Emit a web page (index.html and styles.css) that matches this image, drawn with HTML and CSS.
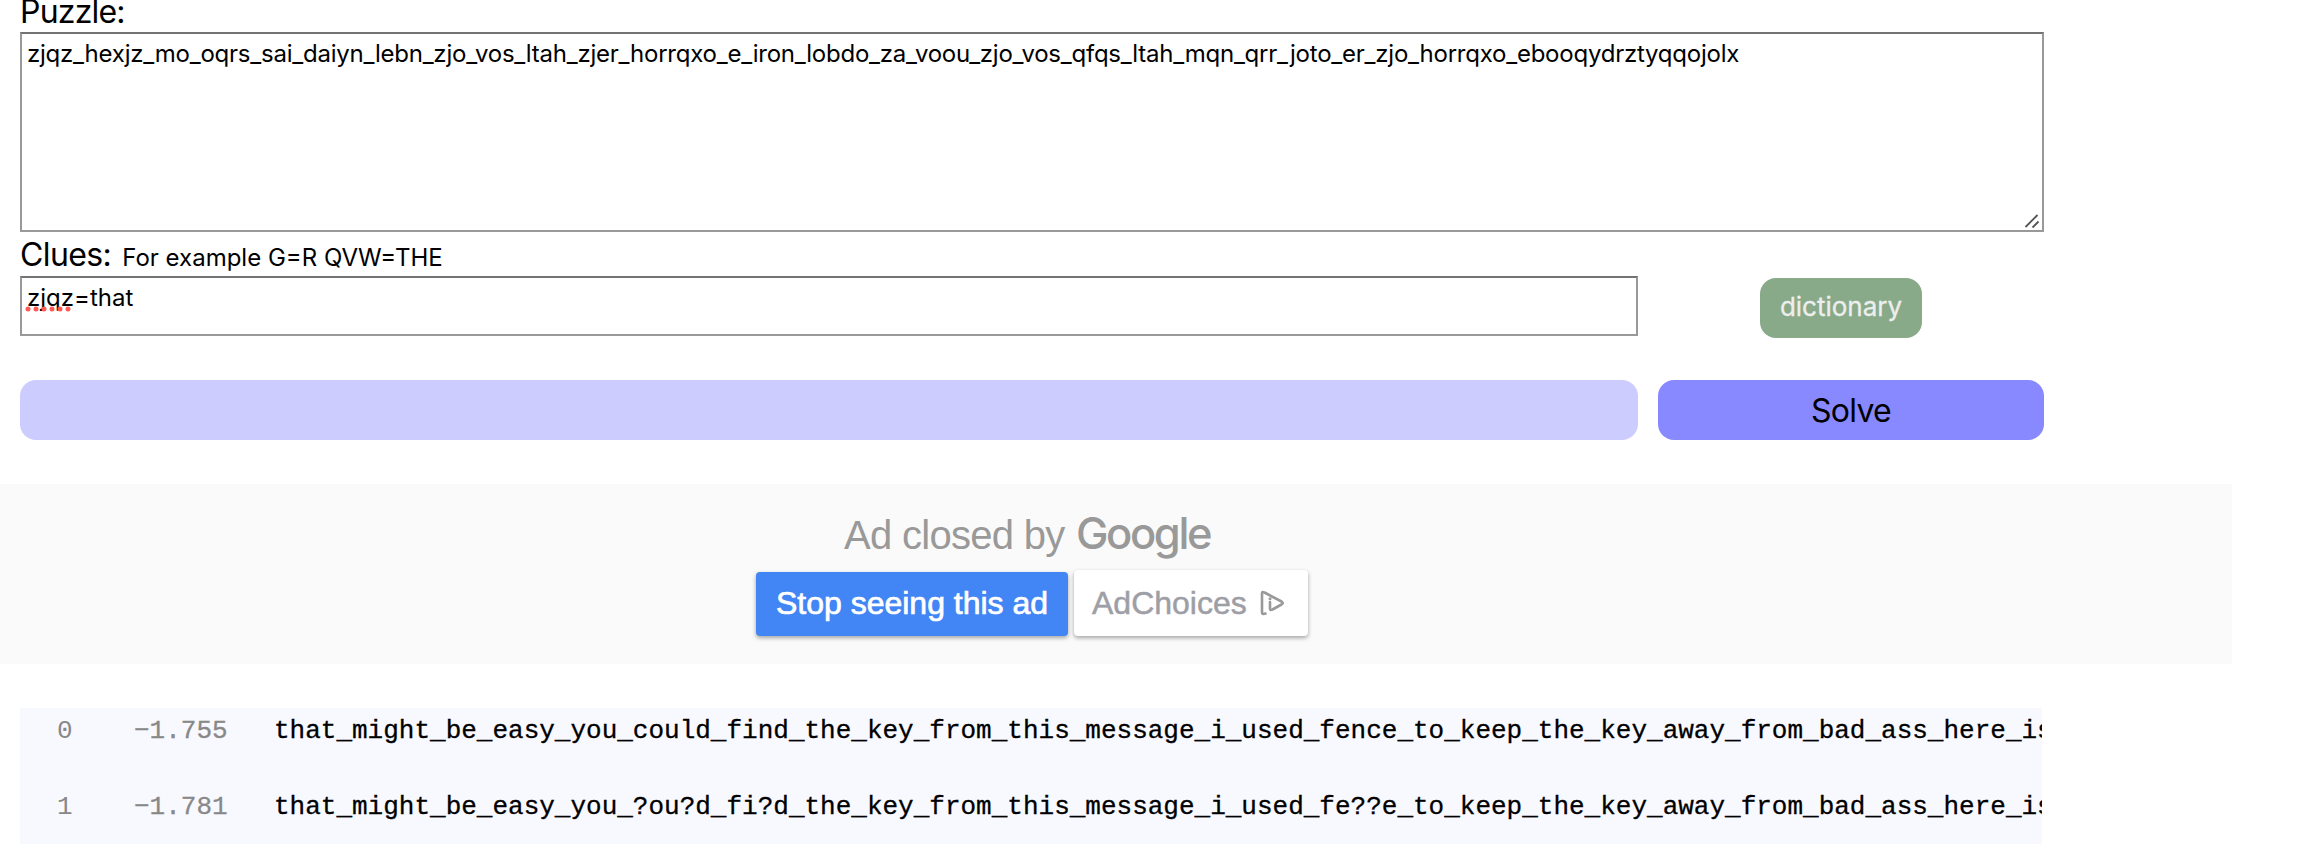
FILE: index.html
```html
<!DOCTYPE html>
<html lang="en">
<head>
<meta charset="utf-8">
<title>Puzzle solver</title>
<link rel="stylesheet" href="styles.css">
</head>
<body>
<main class="solver">
  <label class="label label-puzzle"><span class="puzzle-name">Puzzle:</span></label>
  <div class="box puzzle"><span class="puzzle-text">zjqz_hexjz_mo_oqrs_sai_daiyn_lebn_zjo_vos_ltah_zjer_horrqxo_e_iron_lobdo_za_voou_zjo_vos_qfqs_ltah_mqn_qrr_joto_er_zjo_horrqxo_ebooqydrztyqqojolx</span>
    <svg class="grip" width="16" height="16" viewBox="0 0 16 16"><path d="M1.5 14 13.500 2M8.500 14.500 14.500 8.500"/></svg>
  </div>
  <div class="label label-clues"><span class="clues-name">Clues:</span><span class="hint">For example G=R QVW=THE</span></div>
  <div class="row">
    <div class="box clues"><span class="clue-text"><span class="misspelt">zjqz<svg class="dots" width="48" height="6" viewBox="0 0 48 6"><path d="M3 3H46"/></svg></span>=that</span></div>
    <div class="side"><button class="dictionary"><span>dictionary</span></button></div>
  </div>
  <div class="row actions">
    <div class="progress"></div>
    <button class="solve"><span>Solve</span></button>
  </div>
</main>
<section class="ad">
  <div class="closed"><span class="closed-text">Ad closed by</span><span class="google">Google</span></div>
  <div class="ad-buttons">
    <button class="stop"><span>Stop seeing this ad</span></button>
    <button class="choices"><span>AdChoices</span><svg width="26" height="26" viewBox="0 0 26 26"><path d="M5.500 23.500 3.500 24Q2 24 2 22V3.500Q2 1 4.500 2.500L21.500 11.500Q24 13 21.500 14.500L12.500 19.500Q10 21 10 18.500V12"/><circle cx="10" cy="8.700" r="1.500"/></svg></button>
  </div>
</section>
<section class="results">
  <div class="result"><span class="rank">0</span><span class="score">−1.755</span><span class="answer">that_might_be_easy_you_could_find_the_key_from_this_message_i_used_fence_to_keep_the_key_away_from_bad_ass_here_is</span></div>
  <div class="result"><span class="rank">1</span><span class="score">−1.781</span><span class="answer">that_might_be_easy_you_?ou?d_fi?d_the_key_from_this_message_i_used_fe??e_to_keep_the_key_away_from_bad_ass_here_is</span></div>
</section>
</body>
</html>
```
FILE: styles.css
```css
* { box-sizing: border-box; }
body { margin: 0; height: 844px; overflow: hidden; background: #fff; color: #000; font-family: Inter, "Liberation Sans", sans-serif; }
button { border: 0; margin: 0; padding: 0; font-family: inherit; }
.solver { width: 2024px; margin-left: 20px; }
.label { display: flex; align-items: baseline; white-space: nowrap; font-size: 32px; letter-spacing: -.6px; }
.label-puzzle { height: 32px; line-height: 23px; letter-spacing: -.8px; }
.label-clues { height: 44px; line-height: 46px; }
.hint { font-size: 24px; margin-left: 11px; letter-spacing: 0; }
.box { border: 2px solid #999; border-top-color: #737373; font-size: 24px; line-height: 28px; white-space: nowrap; }
.puzzle { position: relative; height: 200px; padding: 6px 5px; }
.puzzle-text { letter-spacing: -.235px; }
.grip { position: absolute; right: 2px; bottom: 1px; fill: none; stroke: #555; stroke-width: 1.800; }
.row { display: flex; }
.clues { width: 1618px; height: 60px; padding: 6px 5px; }
.misspelt { position: relative; }
.dots { position: absolute; left: -2px; top: 23px; fill: none; stroke: #ff5b53; stroke-width: 5; stroke-linecap: round; stroke-dasharray: 0 8; }
.side { flex: 1; display: flex; justify-content: center; padding-top: 2px; }
.dictionary { width: 162px; height: 60px; padding-bottom: 3px; border-radius: 16px; background: #8a8; color: #eee; font-size: 26px; -webkit-text-stroke: .3px #eee; }
.actions { margin-top: 42px; gap: 20px; }
.progress { width: 1618px; height: 60px; border-radius: 16px; background: #ccf; }
.solve { flex: 1; height: 60px; border-radius: 16px; background: #88f; color: #000; font-size: 32px; letter-spacing: -.7px; }
.ad { width: 2232px; height: 180px; margin-top: 44px; background: #fafafa; font-family: "Liberation Sans", Arial, sans-serif; }
.closed { display: flex; align-items: baseline; padding: 19px 0 0 844px; height: 86px; line-height: 60px; color: #999; white-space: nowrap; font-size: 40px; }
.closed-text { width: 232px; letter-spacing: -.7px; }
.google { font-family: Inter, sans-serif; font-size: 43.500px; font-weight: 500; letter-spacing: -2.400px; }
.ad-buttons { display: flex; align-items: flex-end; gap: 6px; padding-left: 756px; }
.stop, .choices { border-radius: 4px; font-size: 32px; white-space: nowrap; box-shadow: 0 2px 4px rgba(0,0,0,.35); }
.stop { width: 312px; height: 64px; padding-bottom: 2px; background: #4285f4; color: #fff; -webkit-text-stroke: .7px #fff; }
.choices { width: 234px; height: 66px; display: flex; align-items: center; padding-left: 18px; background: #fff; color: #9e9ea6; -webkit-text-stroke: .5px #9e9ea6; }
.choices svg { margin-left: 13px; fill: none; stroke: #999; stroke-width: 2.600; stroke-linecap: round; }
.choices circle { fill: #999; stroke: none; }
.results { width: 2022px; height: 136px; margin: 44px 0 0 20px; overflow: hidden; background: #f8f8ff; font: 26px "Liberation Mono", "Courier New", monospace; }
.result { display: flex; height: 76px; line-height: 46px; white-space: pre; }
.rank { flex: none; width: 114px; padding-left: 37px; color: #888; }
.score { flex: none; width: 140px; color: #888; -webkit-text-stroke: .3px #888; }
.answer { flex: none; -webkit-text-stroke: .3px #000; }
```
